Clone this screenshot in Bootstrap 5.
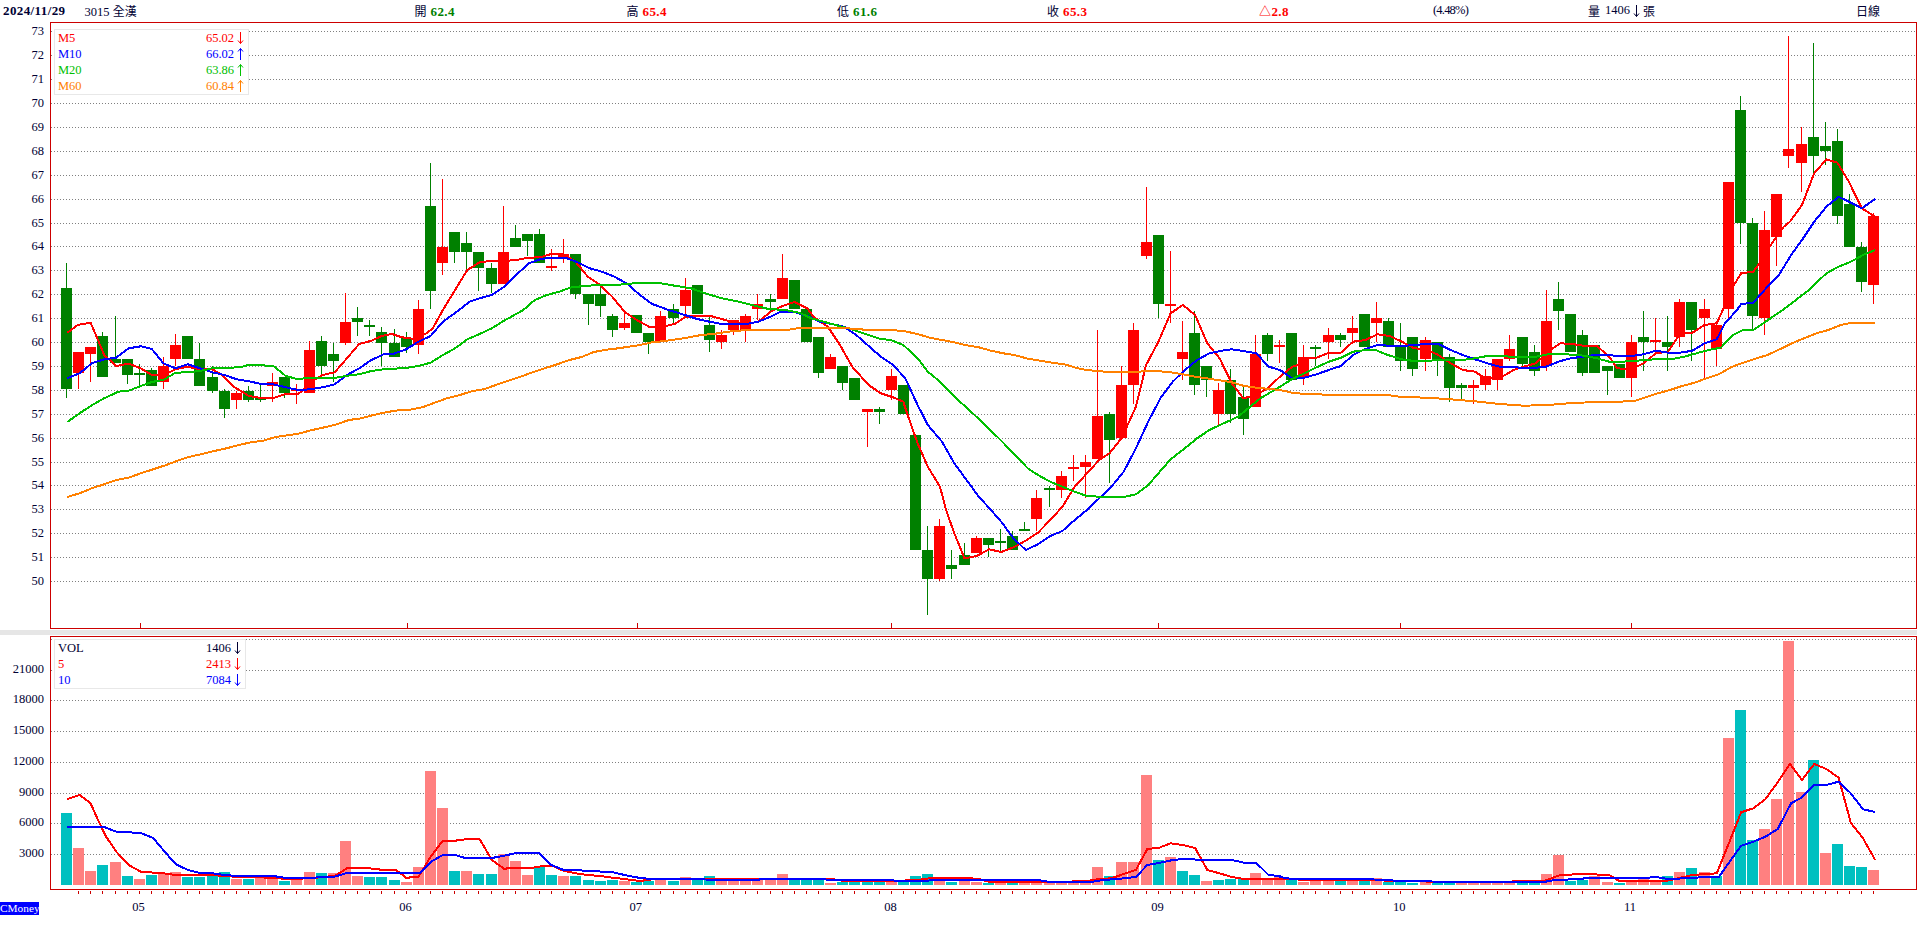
<!DOCTYPE html>
<html lang="zh-Hant">
<head>
<meta charset="utf-8">
<title>3015 全漢 日線</title>
<link href="https://cdn.jsdelivr.net/npm/bootstrap@5.3.0/dist/css/bootstrap.min.css" rel="stylesheet">
<style>
html,body{margin:0;height:926px;overflow:hidden;background:#fff}
body,svg text{font-family:"Liberation Serif","Noto Sans CJK TC",serif;font-size:12.5px;color:#000033}
.topbar{height:22px;display:grid;grid-template-columns:81.5px 330px 212px 210.5px 210px 212px 174px 155px 268px 1fr;padding-left:3px;line-height:21px;white-space:nowrap}
.cjk{font-family:"Noto Sans CJK TC",serif;font-size:12px}
.num{font-weight:700;font-size:13px;letter-spacing:.4px;margin-left:4px}
.datebold{font-weight:700;font-size:13px;letter-spacing:.4px}
.up{color:#f00}.dn{color:#008000}
.pct{letter-spacing:-.8px}
.volword{margin-left:5px}
.arw{display:inline-block;width:7px;height:12px;margin-left:3px;vertical-align:-2px;flex:none}
.arw-top{margin-top:5px;margin-right:3px}
.pane-price{height:608px}
.pane-vol{height:291px}
.splitter{height:5px;background:#e6e6e6}
.chart{display:block;width:1917px}
.legendbox{left:54px;width:195px;background:#fff;border:1px solid #e8e8e8;padding:0 4px 0 3px;line-height:16px}
.lg-price{top:7px;height:66px}
.lg-vol{top:4px;width:192px;height:50px}
.legendrow{height:16px;white-space:nowrap}
.lg-blue{color:#00f}.lg-green{color:#00c000}.lg-orange{color:#ff8000}
.cmoney{left:0;top:267px;width:39px;height:13px;line-height:13px;background:#00f;color:#fff;font-size:11.3px}
svg text{fill:#000033}
</style>
</head>
<body>
<svg width="0" height="0" class="position-absolute"><defs>
<symbol id="ad" viewBox="0 0 7 12"><path d="M3.5 0V11.5M1 8.5L3.5 11.5L6 8.5" fill="none" stroke="currentColor" stroke-width="1"/></symbol>
<symbol id="au" viewBox="0 0 7 12"><path d="M3.5 12V.5M1 3.5L3.5 .5L6 3.5" fill="none" stroke="currentColor" stroke-width="1"/></symbol>
</defs></svg>
<div class="topbar">
  <div class="datebold">2024/11/29</div>
  <div>3015 <span class="cjk">全漢</span></div>
  <div><span class="cjk">開</span><span class="num dn">62.4</span></div>
  <div><span class="cjk">高</span><span class="num up">65.4</span></div>
  <div><span class="cjk">低</span><span class="num dn">61.6</span></div>
  <div><span class="cjk">收</span><span class="num up">65.3</span></div>
  <div class="num up ms-0"><span class="cjk fw-bold">△</span>2.8</div>
  <div class="pct">(4.48%)</div>
  <div class="d-flex"><span class="cjk">量</span><span class="volword">1406</span><svg class="arw arw-top"><use href="#ad"/></svg><span class="cjk">張</span></div>
  <div class="cjk">日線</div>
</div>
<div class="pane-price position-relative">
  <svg id="price" class="chart" viewBox="0 22 1917 608" height="608" shape-rendering="crispEdges"></svg>
  <div class="legendbox lg-price position-absolute">
    <div class="legendrow d-flex justify-content-between up"><span>M5</span><span>65.02<svg class="arw"><use href="#ad"/></svg></span></div>
    <div class="legendrow d-flex justify-content-between lg-blue"><span>M10</span><span>66.02<svg class="arw"><use href="#au"/></svg></span></div>
    <div class="legendrow d-flex justify-content-between lg-green"><span>M20</span><span>63.86<svg class="arw"><use href="#au"/></svg></span></div>
    <div class="legendrow d-flex justify-content-between lg-orange"><span>M60</span><span>60.84<svg class="arw"><use href="#au"/></svg></span></div>
  </div>
</div>
<div class="splitter"></div>
<div class="pane-vol position-relative">
  <svg id="vol" class="chart" viewBox="0 635 1917 291" height="291" shape-rendering="crispEdges"></svg>
  <div class="legendbox lg-vol position-absolute">
    <div class="legendrow d-flex justify-content-between"><span>VOL</span><span>1406<svg class="arw"><use href="#ad"/></svg></span></div>
    <div class="legendrow d-flex justify-content-between up"><span>5</span><span>2413<svg class="arw"><use href="#ad"/></svg></span></div>
    <div class="legendrow d-flex justify-content-between lg-blue"><span>10</span><span>7084<svg class="arw"><use href="#ad"/></svg></span></div>
  </div>
  <div class="cmoney position-absolute">CMoney</div>
</div>
<script src="https://cdn.jsdelivr.net/npm/bootstrap@5.3.0/dist/js/bootstrap.bundle.min.js"></script>
<script>
const C=`g 789 864 1167 1193|r 1056 1056 1118 1167|r 1041 1041 1062 1145|g 996 1008 1130 1130|g 948 1078 1090 1090|g 1078 1078 1124 1151|g 1093 1119 1124 1160|g 1105 1111 1157 1157|r 1072 1099 1145 1166|r 1002 1035 1077 1098|g 1008 1008 1077 1077|g 1029 1078 1157 1157|g 1099 1132 1172 1178|g 1168 1173 1226 1253|r 1173 1180 1199 1226|g 1159 1173 1199 1205|g 1154 1195 1199 1205|r 1120 1147 1157 1205|g 1132 1132 1178 1193|r 1153 1167 1172 1211|r 1024 1050 1178 1178|g 1008 1024 1097 1130|g 1029 1062 1082 1145|r 880 966 1029 1035|g 922 954 965 1008|g 960 975 980 1008|g 981 996 1028 1098|g 987 1029 1070 1070|g 996 1014 1040 1060|r 900 928 1034 1061|g 489 618 872 927|r 537 741 789 825|g 696 696 756 789|g 696 729 756 810|g 756 756 804 873|g 789 804 852 880|r 618 756 852 852|g 675 714 741 741|g 702 702 723 768|g 687 702 789 789|r 747 798 804 813|r 717 762 774 789|g 762 762 882 897|g 882 882 912 974|g 855 882 918 950|g 942 948 990 1011|r 933 969 984 990|g 945 945 999 999|g 999 999 1026 1061|r 933 948 1026 1026|g 912 926 954 969|r 834 870 917 945|g 855 855 942 942|g 945 975 1020 1056|r 990 1005 1026 1047|r 960 960 990 1005|r 942 948 990 1026|r 882 912 927 960|g 882 897 906 940|r 762 834 897 897|g 840 840 927 927|g 928 928 1026 1026|g 1011 1011 1118 1134|r 1062 1071 1107 1107|g 1098 1098 1148 1170|g 1134 1134 1199 1199|r 1227 1227 1235 1340|g 1221 1227 1235 1272|r 1107 1128 1170 1200|g 1155 1155 1242 1242|g 1305 1305 1650 1650|g 1578 1650 1737 1845|r 1557 1578 1737 1743|g 1650 1695 1707 1737|g 1629 1665 1695 1695|r 1608 1614 1659 1659|g 1614 1614 1635 1671|g 1587 1623 1629 1659|g 1593 1608 1650 1650|g 1566 1587 1593 1593|r 1470 1494 1557 1593|g 1458 1464 1470 1521|r 1413 1428 1470 1494|r 1365 1401 1407 1443|r 1365 1386 1401 1494|r 990 1248 1377 1377|g 1236 1242 1320 1449|r 1098 1155 1314 1314|r 969 990 1155 1212|r 561 726 768 777|g 705 705 912 954|r 753 912 915 968|r 963 1056 1077 1140|g 933 999 1155 1185|g 1098 1098 1140 1191|r 1149 1170 1242 1275|g 1107 1140 1242 1270|g 1155 1191 1257 1305|r 1005 1062 1221 1221|g 999 1005 1062 1083|r 1020 1035 1041 1090|g 999 999 1140 1140|r 1035 1071 1134 1155|g 1035 1041 1047 1098|r 984 1005 1026 1077|g 999 1005 1020 1041|r 948 984 999 1026|g 942 942 1041 1041|r 905 954 969 1026|g 954 963 1041 1041|g 969 1035 1083 1113|g 1011 1011 1107 1128|r 1011 1020 1077 1113|g 1026 1026 1080 1128|g 1062 1071 1164 1206|g 1149 1155 1164 1200|r 1140 1155 1164 1212|r 1107 1128 1155 1170|r 1077 1077 1140 1170|r 1005 1047 1077 1083|g 1011 1011 1092 1098|g 1035 1056 1113 1128|r 870 963 1098 1113|g 846 897 933 990|g 942 942 1056 1056|g 990 1005 1119 1128|g 1035 1035 1119 1119|g 1098 1098 1113 1185|g 1092 1092 1134 1134|r 1005 1026 1134 1191|g 933 1011 1026 1113|r 954 1020 1026 1050|g 948 1026 1041 1113|r 897 906 1011 1041|g 906 906 990 1083|r 897 927 954 1137|r 966 975 1047 1098|r 546 546 927 954|g 288 330 669 732|g 654 669 947 987|r 633 690 954 1005|r 582 582 711 798|r 108 447 468 504|r 381 432 489 576|g 129 411 468 525|g 366 438 453 495|g 387 423 648 672|g 582 612 741 741|g 726 741 846 876|r 639 648 855 912`.split('|').map(s=>s.split(' '));
const V=`T579 P684 P753 T735 P726 T768 P777 T765 P762 P756 T771 T771 T765 T756 P777 T777 P771 P771 T783 P777 P756 T759 P759 P663 P768 T771 T771 T780 P786 P741 P453 P564 T753 P753 T762 T762 P702 P723 P765 T741 T765 P768 T768 T780 T783 T780 P783 T786 T783 P780 T783 P771 T780 T768 P777 P780 P780 P780 P777 P762 T777 T777 T777 P789 T786 T783 T783 T783 P783 T783 T768 T762 P771 T786 P777 P786 T789 P786 T786 P783 P780 P786 P786 P786 P786 P741 T768 P726 P726 P465 T720 P711 T753 T765 P783 T780 T777 T777 P759 P777 P771 T780 P786 P780 P780 T780 P780 T780 P774 T786 T786 T789 P786 T786 T786 P786 P786 P786 P786 P786 T786 T786 P762 P705 T783 T780 P768 P786 T789 P780 P774 P780 T768 P756 T744 P756 T768 P354 T270 T660 P627 P537 P63 P516 T420 P699 T672 T738 T741 P750`.split(' ');
/* segment: [origin x, x scale, y add, "zoomX:zoomY ..."] */
const A=0,B=640,D=1280,SA=2.45,SD=2.4615;
function seg(l){let o=[];l.forEach(([ox,sx,ay,s])=>s.trim().split(/\s+/).forEach(p=>{const[a,b]=p.split(':').map(Number);o.push([(ox+a/sx).toFixed(1),((b+ay)/3).toFixed(1)].join(','))}));return o.join(' ')}
const M5=seg([[A,SA,930,"165:68 190:45 222:38 240:90 255:135 285:168 315:161 345:175 372:195 400:196 430:178 460:170 490:178 520:178 545:195 575:232 610:258 640:264 670:264 700:252 730:252 745:238 770:210 790:195 820:187 850:145 880:102 910:92 935:78 960:72 985:82 1015:87 1045:70 1060:55 1085:0 1115:-60 1145:-120 1175:-143 1205:-148 1235:-147 1265:-150 1295:-157 1325:-158 1350:-168 1380:-168 1410:-145 1440:-100 1470:-75 1500:-40 1530:5 1560:30"],[B,SA,930,"25:52 55:50 85:42 112:20 170:17 200:27 230:37 260:42 290:35 320:5 345:-10 378:-24 410:-5 425:20 460:50 490:105 520:170 560:225 590:250 620:262 645:275 660:330 680:400 705:470 735:530 750:600 770:670 795:745 825:738 855:718 885:726 915:712 945:692 975:668 1005:630 1035:590 1065:530 1095:490 1125:450 1150:430 1180:385 1215:290 1240:165 1270:95 1300:10 1330:-15 1360:15 1390:100 1420:145 1450:220 1478:265 1510:255 1537:235"],[D,SD,930,"0:200 30:170 45:165 60:143 90:143 120:128 150:128 180:95 210:90 240:73 270:78 300:95 330:115 360:118 390:135 420:160 450:180 480:185 505:205 540:205 575:180 600:170 630:160 660:125 690:100 720:102 750:108 780:108 810:140 830:175 865:178 895:160 925:130 955:125 985:70 1015:68 1045:45 1075:40 1090:0 1105:-50 1135:-110 1165:-115 1180:-140 1205:-190 1240:-250 1255:-265 1285:-315 1315:-410 1345:-452 1372:-442 1400:-385 1432:-305 1465:-280"]]);
const M10=seg([[A,SA,930,"165:205 195:190 225:160 255:148 285:143 315:115 345:109 372:117 400:160 430:175 460:163 490:175 520:187 550:195 580:208 610:214 640:222 670:223 700:232 730:240 760:238 790:232 820:223 850:195 880:175 910:150 940:133 965:131 995:118 1025:95 1055:78 1085:35 1125:0 1150:-25 1175:-35 1205:-45 1235:-70 1265:-105 1295:-140 1325:-153 1355:-157 1385:-157 1415:-143 1445:-125 1475:-115 1505:-100 1535:-80 1568:-45"],[B,SA,930,"30:-18 70:0 110:15 140:27 170:35 200:42 230:42 260:42 290:35 320:20 345:5 375:5 410:18 440:35 470:42 500:50 530:75 560:108 590:140 620:165 650:205 680:285 705:345 740:395 770:460 800:510 830:560 860:600 885:635 915:685 945:720 975:703 1005:678 1035:663 1065:630 1095:600 1125:565 1155:530 1185:485 1215:415 1245:335 1275:265 1305:215 1335:180 1365:150 1395:130 1425:122 1450:118 1478:123 1510:130 1540:170 1568:180"],[D,SD,930,"30:205 60:203 90:193 120:180 150:168 180:135 210:117 240:105 270:107 300:108 330:105 360:102 390:102 420:120 450:135 480:148 510:160 540:170 570:170 600:175 630:173 655:170 685:155 715:145 745:140 775:135 805:135 835:138 865:138 895:133 925:122 955:128 985:128 1015:122 1045:100 1075:88 1095:40 1125:0 1135:-18 1165:-22 1200:-70 1228:-105 1258:-165 1285:-210 1315:-265 1345:-310 1375:-340 1405:-322 1432:-305 1465:-333"]]);
const M20=seg([[A,SA,930,"165:336 195:310 222:288 255:265 290:245 315:242 345:228 372:216 400:210 430:188 460:187 490:183 520:175 560:173 590:172 610:164 640:166 670:168 700:198 725:206 760:205 790:204 820:204 850:197 880:193 910:183 940:178 965:176 995:174 1025:168 1055:158 1085:135 1115:115 1145:88 1175:72 1205:55 1235:32 1282:0 1310:-30 1340:-45 1370:-55 1400:-68 1440:-73 1470:-75 1500:-75 1530:-77 1568:-82"],[B,SA,930,"50:-80 85:-73 125:-65 155:-52 200:-35 235:-27 275:-15 315:-3 355:0 390:8 420:25 470:42 510:55 560:75 590:87 615:90 645:105 680:145 705:185 735:215 775:265 815:310 850:350 885:392 915:430 950:475 975:495 1005:515 1035:530 1065:545 1095:558 1125:560 1155:561 1185:561 1215:553 1245:525 1270:490 1300:448 1335:415 1365:385 1395:360 1430:340 1465:320 1490:295 1520:265 1568:230"],[D,SD,930,"30:207 60:190 90:172 120:155 150:143 180:125 210:120 235:120 265:135 300:148 330:153 360:153 390:150 420:150 450:150 480:145 510:138 540:138 570:140 600:140 630:140 660:133 690:132 720:134 750:137 780:145 810:155 840:155 870:153 900:150 930:147 965:147 995:140 1025:130 1055:120 1085:113 1115:75 1140:60 1165:60 1195:35 1240:-2 1270:-30 1300:-58 1345:-110 1375:-130 1405:-145 1435:-165 1465:-180"]]);
const M60=seg([[A,SA,930,"165:561 195:550 225:535 255:523 285:510 315:503 345:490 375:478 405:466 435:452 465:440 495:432 525:423 555:415 585:405 615:397 645:392 675:381 705:376 735:370 765:360 795:352 825:343 855:330 885:325 915:315 945:307 975:301 1005:299 1035:292 1065:278 1095:265 1125:256 1155:244 1185:238 1215:225 1245:212 1275:200 1305:187 1335:175 1365:163 1395:150 1425:141 1455:126 1485:119 1515:115 1568:105"],[B,SA,930,"30:97 60:93 90:88 120:82 150:75 180:72 210:66 240:62 270:60 300:60 360:60 390:54 420:54 500:54 530:57 560:60 615:60 645:63 680:72 710:83 740:90 770:97 800:106 830:112 860:122 890:130 920:136 950:146 980:152 1010:158 1040:163 1070:174 1095:180 1140:185 1185:185 1215:185 1265:183 1300:187 1330:193 1360:200 1395:206 1450:217 1480:228 1510:233 1568:240"],[D,SD,930,"30:248 60:252 120:254 265:255 300:261 360:263 420:268 480:274 540:282 600:287 660:285 720:279 780:276 870:274 900:262 930:250 960:240 990:228 1020:218 1050:205 1080:193 1110:172 1140:158 1170:146 1200:135 1230:118 1260:100 1290:85 1320:70 1350:60 1380:45 1405:39 1465:39"]]);
const VM5=seg([[A,SA,1860,"165:537 195:525 222:550 240:600 260:650 285:695 315:735 345:755 400:760 430:765 520:765 550:768 585:771 670:773 700:777 760:775 790:771 820:768 850:745 905:745 940:750 970:750 995:773 1025:771 1055:710 1085:662 1115:662 1145:657 1175:657 1205:720 1235:746 1265:743 1305:743 1330:738 1355:738 1380:752 1410:760 1440:765 1470:768 1500:773 1530:777 1568:783"],[B,SA,1860,"30:778 90:778 120:777 230:777 295:778 360:778 440:777 470:777 500:783 620:783 680:780 710:775 740:773 795:773 830:777 860:787 1000:787 1095:783 1125:777 1155:775 1185:762 1215:750 1243:687 1272:683 1300:670 1330:675 1360:684 1390:750 1420:760 1450:771 1480:777 1568:777"],[D,SD,1860,"30:777 60:780 210:780 300:783 450:787 650:783 690:765 750:762 810:765 835:783 950:783 1015:765 1075:760 1105:670 1135:577 1165:565 1195:537 1225:487 1255:432 1285:480 1315:432 1345:447 1375:473 1405:608 1435:655 1465:720"]]);
const VM10=seg([[A,SA,1860,"165:621 255:621 285:635 315:637 345:639 375:654 400:690 430:732 460:750 490:759 520:760 550:765 580:768 670:768 700:774 760:774 790:771 820:770 850:759 1030:759 1060:722 1085:705 1115:705 1140:714 1205:714 1235:707 1265:699 1321:699 1351:735 1381:750 1410:750 1440:753 1500:756 1530:765 1568:774"],[B,SA,1860,"30:777 290:780 295:777 440:777 470:780 620:780 625:783 705:783 710:780 975:780 1005:786 1105:786 1135:780 1170:777 1215:771 1243:735 1272:729 1305:720 1330:717 1390:720 1450:720 1480:728 1510:729 1540:765 1568:768"],[D,SD,1860,"0:771 30:777 210:777 300:783 450:786 650:786 675:780 745:777 750:774 895:774 925:771 955:777 1015:774 1045:771 1080:771 1135:677 1165:665 1195:650 1225:627 1258:550 1285:532 1315:495 1345:495 1375:485 1405:520 1435:568 1465:576"]]);
const cx=i=>66.5+12.13*i, FR='#cc0000', ticks=[139.6,406.5,636.7,891.4,1158.4,1400.2,1631], mon=['05','06','07','08','09','10','11'];
const r=(x,y,w,h,f)=>`<rect x="${x}" y="${y}" width="${w}" height="${h}" fill="${f}"/>`;
const line=(x1,y1,x2,y2,s,extra='')=>`<line x1="${x1}" y1="${y1}" x2="${x2}" y2="${y2}" stroke="${s}" ${extra}/>`;
const poly=(p,s)=>`<polyline points="${p}" fill="none" stroke="${s}" stroke-width="2"/>`;
const dot='stroke-dasharray="1 2"';
/* price pane */
let h='';
for(let p=50;p<=73;p++){const y=Math.round(31.3+23.9*(73-p))+.5;
  h+=line(51,y,1916,y,'#808080',dot);
  h+=`<text x="44" y="${y+3.5}" text-anchor="end">${p}</text>`;}
C.forEach((c,i)=>{const f=c[0]=='g'?'#008000':'#ff0000',[H,T,Bt,L]=c.slice(1).map(v=>v/3),x=Math.round(cx(i)-5.5),w=Math.floor(cx(i));
  h+=r(w,H,1,L-H,f)+r(x,T,11,Math.max(Bt-T,2),f);});
h+=poly(M5,'#ff0000')+poly(M10,'#0000ff')+poly(M20,'#00c000')+poly(M60,'#ff8000');
h+=`<rect x="50.5" y="22.5" width="1865.5" height="606" fill="none" stroke="${FR}"/>`;
ticks.forEach(t=>{h+=r(Math.round(t),623,1,6,FR)});
document.getElementById('price').innerHTML=h;
/* volume pane */
let g='';
[[24000,639],[21000,670],[18000,700],[15000,731],[12000,762],[9000,793],[6000,823],[3000,854]].forEach(([v,y],k)=>{
  g+=line(51,y+.5,1916,y+.5,'#808080',dot);
  if(k)g+=`<text x="44" y="${y+3}" text-anchor="end">${v}</text>`;});
V.forEach((b,i)=>{const t=(+b.slice(1)+1860)/3;g+=r(Math.round(cx(i)-5.5),t,11,885-t,b[0]=='T'?'#00c0c0':'#ff8080');});
g+=poly(VM5,'#ff0000')+poly(VM10,'#0000ff');
g+=`<rect x="50.5" y="636.5" width="1865.5" height="253" fill="none" stroke="${FR}"/>`;
for(let i=1;i<150;i++)g+=r(Math.floor(cx(i)),891,1,3,FR);
mon.forEach((m,k)=>{g+=`<text x="${ticks[k]-1}" y="911" text-anchor="middle">${m}</text>`});
document.getElementById('vol').innerHTML=g;
</script>
</body>
</html>
